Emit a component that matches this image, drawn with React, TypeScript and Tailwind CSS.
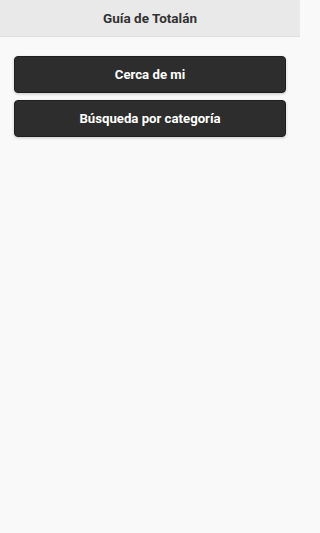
export default function App() {
  return (
    <div className="min-h-[533px] w-full bg-[#f9f9f9] font-['Roboto',sans-serif]">
      <div className="w-[300px]">
        <header className="h-[37px] bg-[#e9e9e9] border-b border-[#dddddd] flex items-center justify-center">
          <h1 className="text-[13.5px] font-bold text-[#333333]">Guía de Totalán</h1>
        </header>
        <div className="px-[14px] pt-[19px] flex flex-col gap-[7px]">
          <button className="h-[37px] rounded-[4px] bg-[#2d2d2d] border border-[#1f1f1f] shadow-[0_1px_3px_rgba(0,0,0,0.2)] text-white text-[13.2px] font-bold">
            Cerca de mi
          </button>
          <button className="h-[37px] rounded-[4px] bg-[#2d2d2d] border border-[#1f1f1f] shadow-[0_1px_3px_rgba(0,0,0,0.2)] text-white text-[13.2px] font-bold">
            Búsqueda por categoría
          </button>
        </div>
      </div>
    </div>
  );
}
